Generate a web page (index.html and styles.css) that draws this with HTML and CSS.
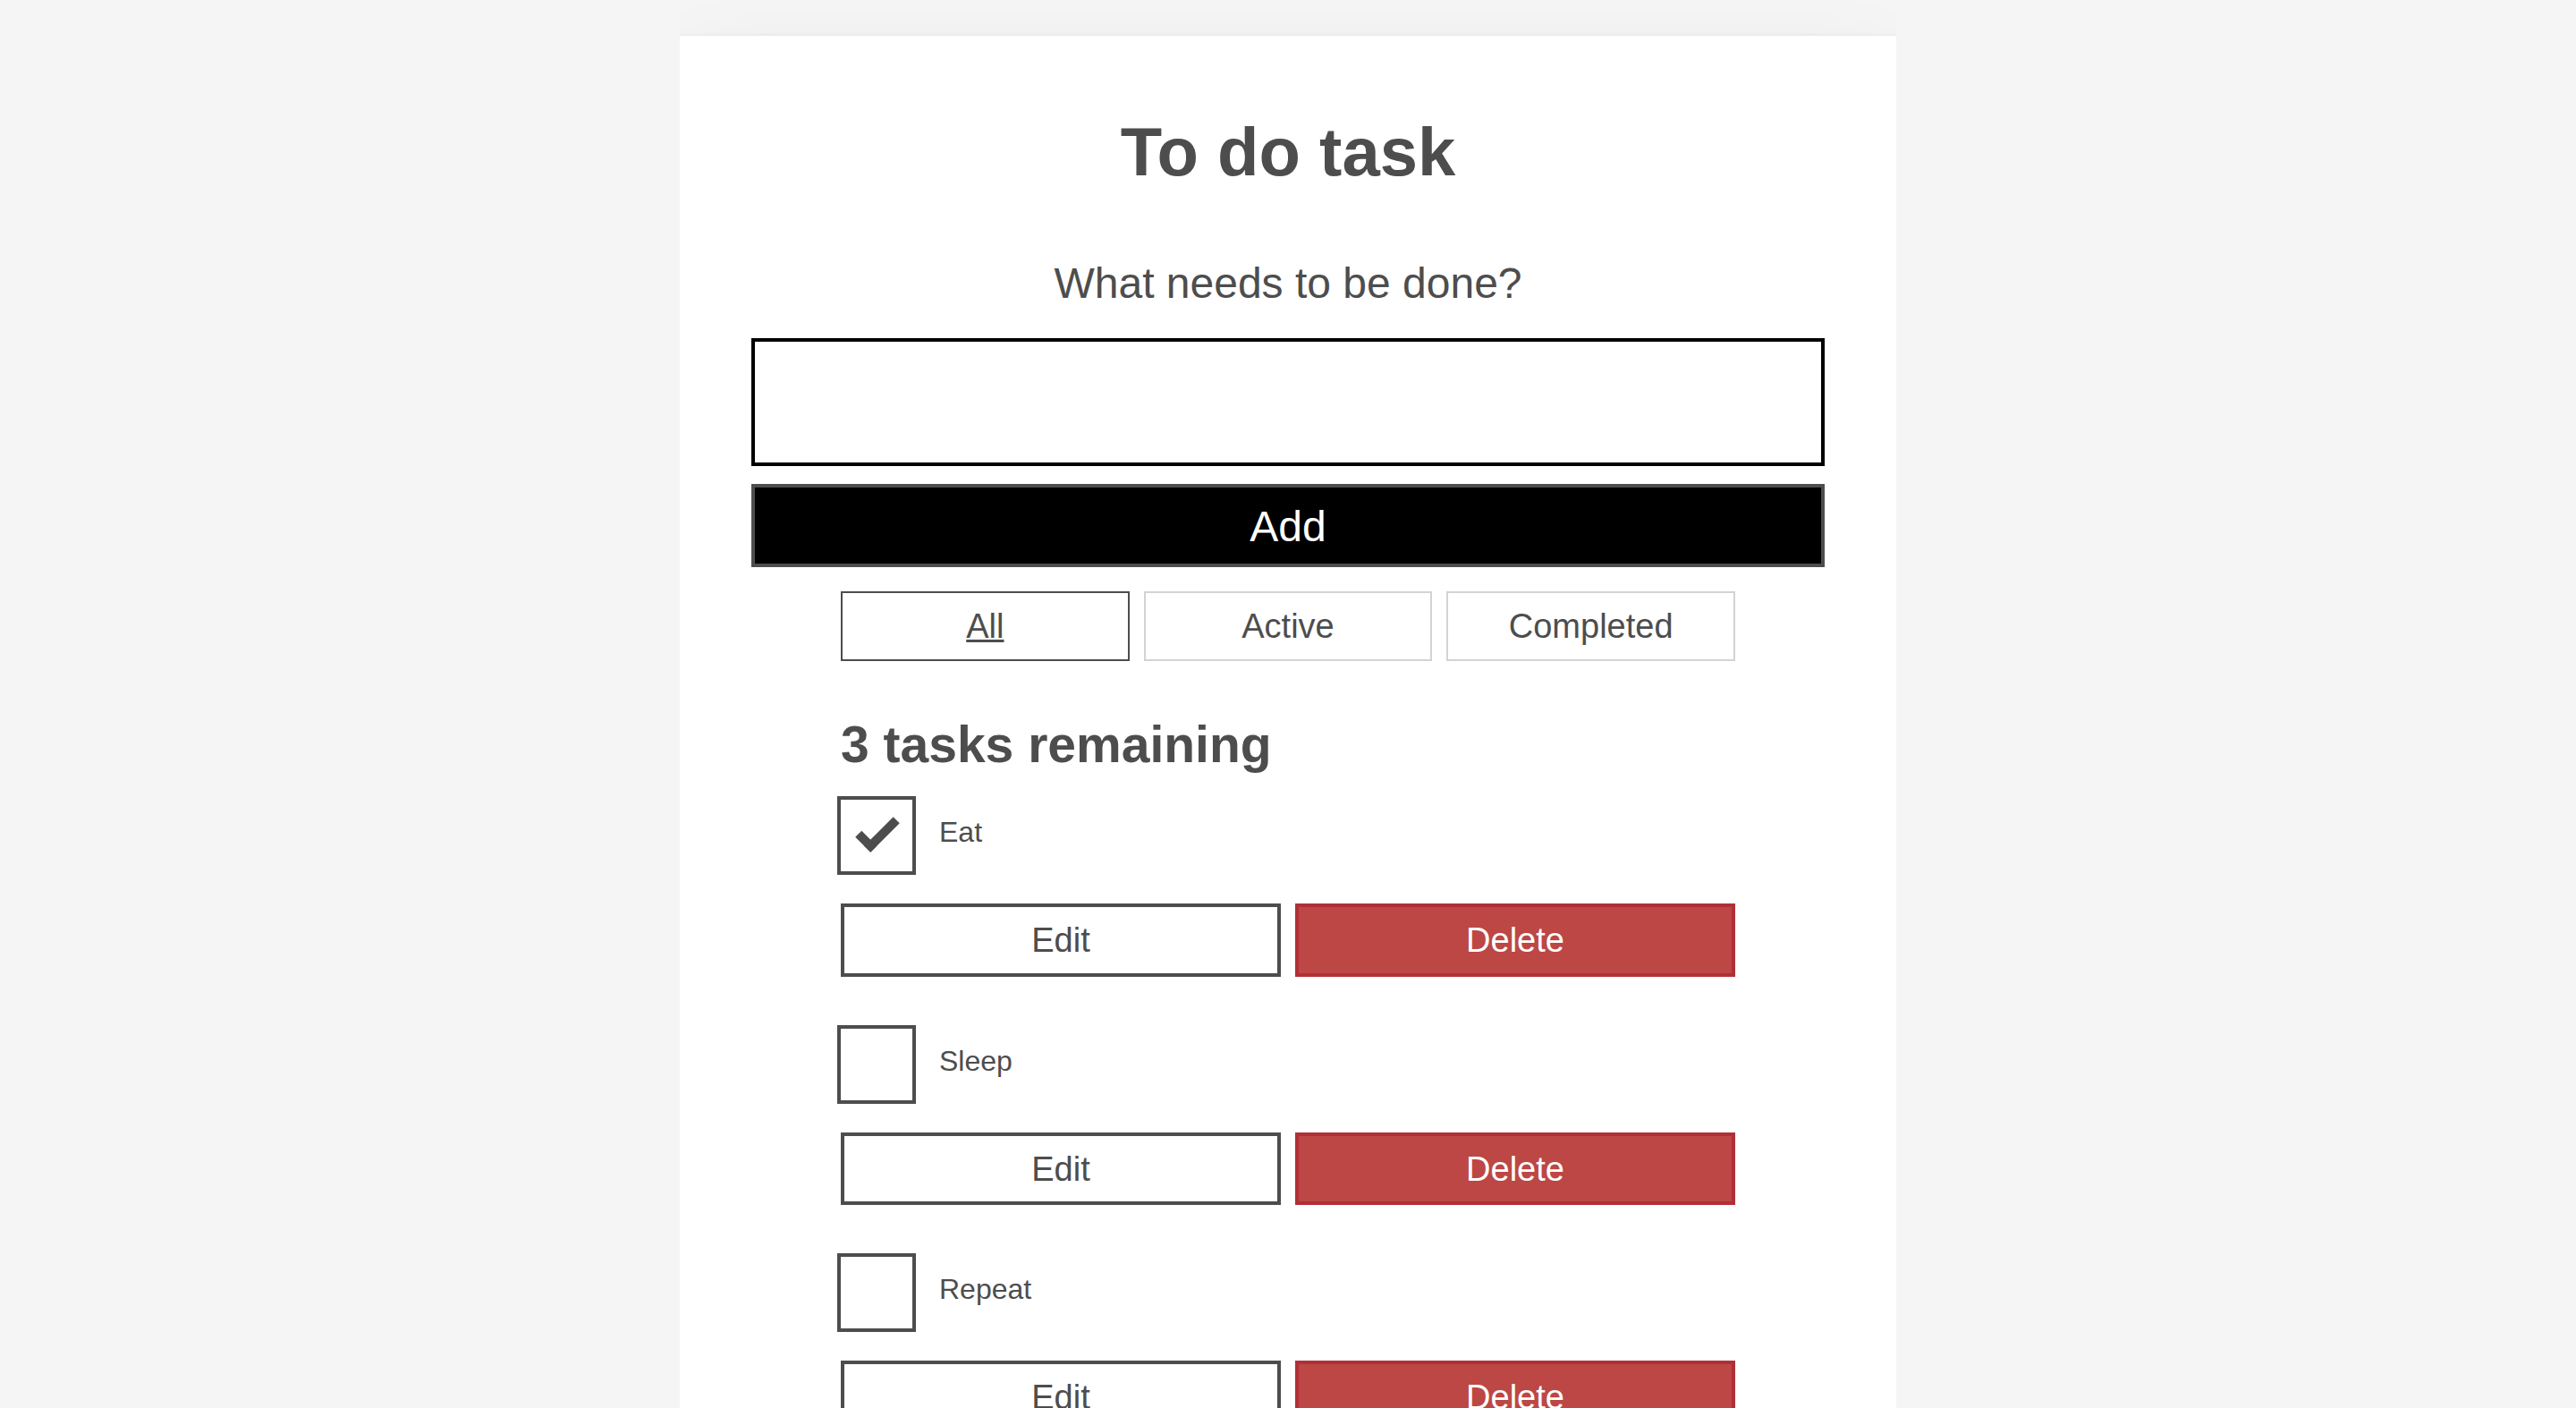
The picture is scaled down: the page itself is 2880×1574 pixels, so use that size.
FILE: index.html
```html
<!DOCTYPE html>
<html lang="en">
<head>
<meta charset="utf-8">
<title>To do task</title>
<link rel="stylesheet" href="styles.css">
</head>
<body>
<div class="todoapp stack-large">
  <h1 class="app-title">To do task</h1>
  <form class="add-form">
    <h2 class="label-wrapper">
      <label for="new-todo-input" class="label__lg">What needs to be done?</label>
    </h2>
    <input type="text" id="new-todo-input" class="input__lg" name="text" autocomplete="off">
    <button type="button" class="btn btn__primary btn__lg">Add</button>
  </form>
  <div class="filters btn-group stack-exception">
    <button type="button" class="btn toggle-btn is-pressed">All</button>
    <button type="button" class="btn toggle-btn">Active</button>
    <button type="button" class="btn toggle-btn">Completed</button>
  </div>
  <h2 class="list-heading">3 tasks remaining</h2>
  <ul class="todo-list stack-large stack-exception">
    <li class="todo stack-small">
      <div class="c-cb">
        <input id="todo-0" type="checkbox" checked>
        <label class="todo-label" for="todo-0">Eat</label>
      </div>
      <div class="btn-group">
        <button type="button" class="btn">Edit</button>
        <button type="button" class="btn btn__danger">Delete</button>
      </div>
    </li>
    <li class="todo stack-small">
      <div class="c-cb">
        <input id="todo-1" type="checkbox">
        <label class="todo-label" for="todo-1">Sleep</label>
      </div>
      <div class="btn-group">
        <button type="button" class="btn">Edit</button>
        <button type="button" class="btn btn__danger">Delete</button>
      </div>
    </li>
    <li class="todo stack-small">
      <div class="c-cb">
        <input id="todo-2" type="checkbox">
        <label class="todo-label" for="todo-2">Repeat</label>
      </div>
      <div class="btn-group">
        <button type="button" class="btn">Edit</button>
        <button type="button" class="btn btn__danger">Delete</button>
      </div>
    </li>
  </ul>
</div>
</body>
</html>
```

FILE: styles.css
```css
*,
*::before,
*::after {
  box-sizing: border-box;
}

html {
  font: 20px/1.15 "Liberation Sans", Arial, sans-serif;
}

h1,
h2 {
  margin-bottom: 0;
}

ul {
  list-style: none;
  padding: 0;
}

button {
  appearance: none;
  background: transparent;
  border: none;
  color: inherit;
  font: inherit;
  margin: 0;
  overflow: visible;
  padding: 0;
  width: auto;
}

button,
input {
  font-family: inherit;
  font-size: 100%;
  line-height: 1.15;
  margin: 0;
  overflow: visible;
}

body {
  background-color: #f5f5f5;
  color: #4d4d4d;
  font-family: "Liberation Sans", Arial, sans-serif;
  font-size: 1.9rem;
  line-height: 1.31579;
  margin: 0 auto;
  max-width: 68rem;
  width: 100%;
}

/* global */
.btn {
  border: 0.2rem solid #4d4d4d;
  cursor: pointer;
  padding: 0.8rem 1rem 0.7rem;
  text-transform: capitalize;
}

.btn.toggle-btn {
  border-color: #d3d3d3;
  border-width: 2px;
}

.btn.toggle-btn.is-pressed {
  border-color: #4d4d4d;
  text-decoration: underline;
}

.btn__danger {
  background-color: #bc4744;
  border-color: #b12f37;
  color: #fff;
}

.btn__primary {
  background-color: #000;
  color: #fff;
}

.btn-group {
  display: flex;
  justify-content: space-between;
}

.btn-group > * {
  flex: 1 1 49%;
}

.btn-group > * + * {
  margin-left: 0.8rem;
}

.label-wrapper {
  flex: 0 0 100%;
  margin: 0;
  text-align: center;
}

.stack-large > *,
.stack-small > * {
  margin-bottom: 0;
  margin-top: 0;
}

.stack-small > * + * {
  margin-top: 1.4rem;
}

.stack-large > * + * {
  margin-top: 2.8rem;
}

.stack-exception {
  margin-top: 1.2rem;
}

.todoapp > .filters {
  margin-top: 27px;
}

.todo-list > .todo + .todo {
  margin-top: 58px;
}

/* app */
.todoapp {
  background: #fff;
  box-shadow: 0 4px 8px 0 rgba(0, 0, 0, 0.2), 0 2.5rem 5rem 0 rgba(0, 0, 0, 0.1);
  margin: 2rem 0 4rem 0;
  padding: 4rem;
  position: relative;
}

.todoapp > * {
  margin-left: auto;
  margin-right: auto;
  max-width: 50rem;
}

.todoapp > .add-form {
  max-width: 100%;
}

.todoapp > .app-title {
  display: block;
  margin: 0;
  margin-bottom: 1rem;
  max-width: 100%;
  text-align: center;
}

.label__lg {
  line-height: 1.01567;
  font-weight: 300;
  margin-bottom: 1rem;
  padding: 0.8rem;
  text-align: center;
}

.input__lg {
  border: 4px solid #000;
  border-radius: 0;
  padding: 2rem;
  outline: none;
}

.label__lg,
.input__lg,
.btn__lg {
  display: inline-block;
  font-size: 2.4rem;
  width: 100%;
}

.label__lg,
.input__lg {
  margin-bottom: 1rem;
}

.filters {
  width: 100%;
}

/* todo items */
.todo {
  display: flex;
  flex-direction: row;
  flex-wrap: wrap;
}

.todo > * {
  flex: 0 0 100%;
}

/* checkbox */
.c-cb {
  box-sizing: border-box;
  clear: left;
  display: block;
  font-family: "Liberation Sans", Arial, sans-serif;
  font-size: 1.6rem;
  font-weight: 400;
  line-height: 1.25;
  min-height: 88px;
  padding-left: 80px;
  position: relative;
}

.c-cb > label::before,
.c-cb > input {
  box-sizing: border-box;
  height: 88px;
  left: -4px;
  top: -4px;
  width: 88px;
}

.c-cb > input {
  cursor: pointer;
  margin: 0;
  opacity: 0;
  position: absolute;
  z-index: 1;
}

.c-cb > label {
  cursor: pointer;
  display: inline-block;
  font-family: inherit;
  font-size: inherit;
  line-height: inherit;
  margin-bottom: 0;
  padding: 16px 30px 10px;
}

.c-cb > label::before {
  background: transparent;
  border: 4px solid currentColor;
  content: "";
  position: absolute;
}

.c-cb > label::after {
  background: transparent;
  border: solid;
  border-width: 0 0 10px 10px;
  border-top-color: transparent;
  box-sizing: content-box;
  content: "";
  height: 14px;
  left: 18px;
  opacity: 0;
  position: absolute;
  top: 22px;
  transform: rotate(-45deg);
  width: 36px;
}

.c-cb > input:checked + label::after {
  opacity: 1;
}
```
